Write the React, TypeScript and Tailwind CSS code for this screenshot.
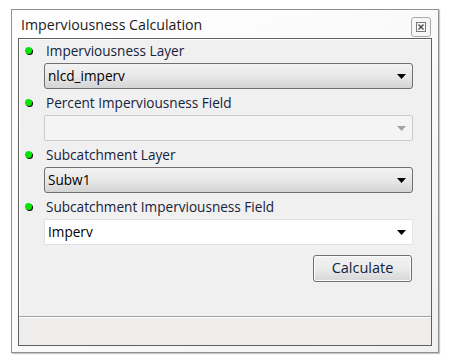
import type { ReactNode } from 'react'

const font = { fontFamily: '"Open Sans", "Liberation Sans", Arial, sans-serif' }

function Dot() {
  return <span className="block h-[7px] w-[7px] rounded-full bg-[#0ae30a] shadow-[1px_1px_0_#111]" />
}

function Arrow({ muted }: { muted?: boolean }) {
  return (
    <svg width="9" height="5" viewBox="0 0 9 5">
      <path d="M0 0h9L4.5 5z" fill={muted ? '#a3a3a3' : '#000'} />
    </svg>
  )
}

function Field({ label, children }: { label: string; children: ReactNode }) {
  return (
    <div className="flex flex-col">
      <div className="flex h-[19px] items-center">
        <div className="w-[27px] pl-[6px]">
          <Dot />
        </div>
        <span className="text-[13.6px] leading-none text-[#16233a]">{label}</span>
      </div>
      <div className="mt-[3px] mb-[4px] pl-[25px] pr-[18px]">{children}</div>
    </div>
  )
}

function Combo({ value, kind }: { value: string; kind: 'button' | 'disabled' | 'edit' }) {
  const box =
    kind === 'button'
      ? 'border-[#707070] bg-gradient-to-b from-[#f3f3f3] via-[#e8e8e8] to-[#d4d4d4] rounded-[3px]'
      : kind === 'disabled'
        ? 'border-[#c9cbcd] bg-[#f4f4f4] rounded-[2px]'
        : 'border-[#e2e3ea] bg-white'
  return (
    <div className={`flex h-[26px] items-center justify-between border pl-[3px] pr-[6px] ${box}`}>
      <span className="text-[13.6px] leading-none text-black">{value}</span>
      <Arrow muted={kind === 'disabled'} />
    </div>
  )
}

export default function App() {
  return (
    <div className="h-[362px] w-[450px] bg-white pl-[11px] pt-[9px]" style={font}>
      <div className="flex h-[344px] w-[428px] flex-col border border-[#8f8f8f] bg-gradient-to-br from-white via-[#fafafa] to-[#f1f1f1] shadow-[1px_1px_1px_#c8c8c8]">
        <div className="flex h-[28px] items-center justify-between pl-[9px] pr-[7px]">
          <span className="pt-[3px] text-[14.2px] leading-none text-[#1b1b1b]">Imperviousness Calculation</span>
          <div className="mt-[5px] flex h-[20px] w-[20px] items-center justify-center rounded-[3px] border border-[#a9a9a9] bg-[#f7f7f7]">
            <svg width="10" height="10" viewBox="0 0 10 10">
              <rect x="0.5" y="0.5" width="9" height="9" fill="none" stroke="#7a7a7a" />
              <path d="M2.5 2.5l5 5M7.5 2.5l-5 5" stroke="#4a4a4a" strokeWidth="1.4" />
            </svg>
          </div>
        </div>
        <div className="mx-[6px] mb-[6px] flex flex-1 flex-col border border-[#5f5f5f] bg-[#f0f0f0] shadow-[inset_1px_1px_0_#ffffff]">
          <div className="flex flex-1 flex-col pt-[2px]">
            <Field label="Imperviousness Layer">
              <Combo value="nlcd_imperv" kind="button" />
            </Field>
            <Field label="Percent Imperviousness Field">
              <Combo value="" kind="disabled" />
            </Field>
            <Field label="Subcatchment Layer">
              <Combo value="Subw1" kind="button" />
            </Field>
            <Field label="Subcatchment Imperviousness Field">
              <Combo value="Imperv" kind="edit" />
            </Field>
            <div className="flex justify-end pr-[19px] pt-[6px]">
              <button className="flex h-[27px] w-[99px] items-center justify-center rounded-[3px] border border-[#707070] bg-gradient-to-b from-[#f2f2f2] via-[#ebebeb] to-[#d6d6d6] text-[14.5px] leading-none text-[#0f2240] shadow-[inset_0_0_0_1px_#fcfcfc]">
                Calculate
              </button>
            </div>
          </div>
          <div className="h-[29px] border-t border-[#a0a0a0] bg-[#efecec] shadow-[inset_0_1px_0_#ffffff]" />
        </div>
      </div>
    </div>
  )
}
